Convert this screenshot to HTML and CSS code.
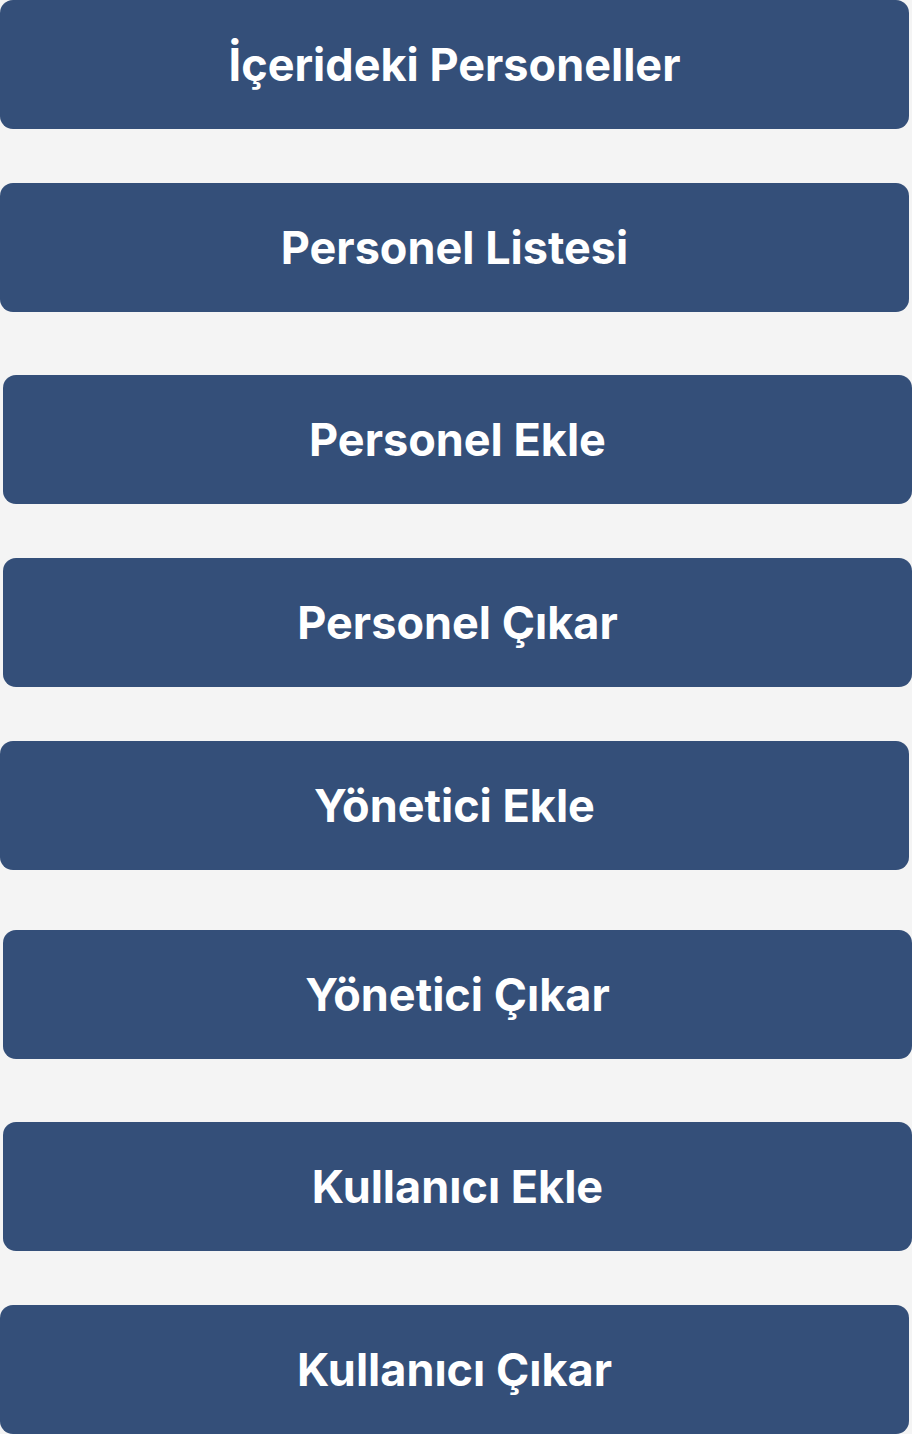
FILE: index.html
```html
<!DOCTYPE html>
<html lang="tr">
<head>
<meta charset="utf-8">
<title>Menü</title>
<link rel="stylesheet" href="styles.css">
</head>
<body>
<nav class="menu">
  <button class="menu-btn">İçerideki Personeller</button>
  <button class="menu-btn gap-a">Personel Listesi</button>
  <button class="menu-btn gap-b shift">Personel Ekle</button>
  <button class="menu-btn gap-a shift">Personel Çıkar</button>
  <button class="menu-btn gap-a">Yönetici Ekle</button>
  <button class="menu-btn gap-c shift">Yönetici Çıkar</button>
  <button class="menu-btn gap-b shift">Kullanıcı Ekle</button>
  <button class="menu-btn gap-a">Kullanıcı Çıkar</button>
</nav>
</body>
</html>
```
FILE: styles.css
```css
html, body {
  margin: 0;
  padding: 0;
  background: #f4f4f4;
}
.menu {
  display: flex;
  flex-direction: column;
  align-items: flex-start;
}
.menu-btn {
  display: flex;
  align-items: center;
  justify-content: center;
  width: 909px;
  height: 129px;
  margin: 0;
  padding: 0;
  border: none;
  border-radius: 13px;
  background: #344f79;
  color: #ffffff;
  font-family: Inter, "Noto Sans", sans-serif;
  font-weight: 700;
  font-size: 45px;
  letter-spacing: 0;
}
.gap-a { margin-top: 54px; }
.gap-b { margin-top: 63px; }
.gap-c { margin-top: 60px; }
.shift { margin-left: 3px; }
```
